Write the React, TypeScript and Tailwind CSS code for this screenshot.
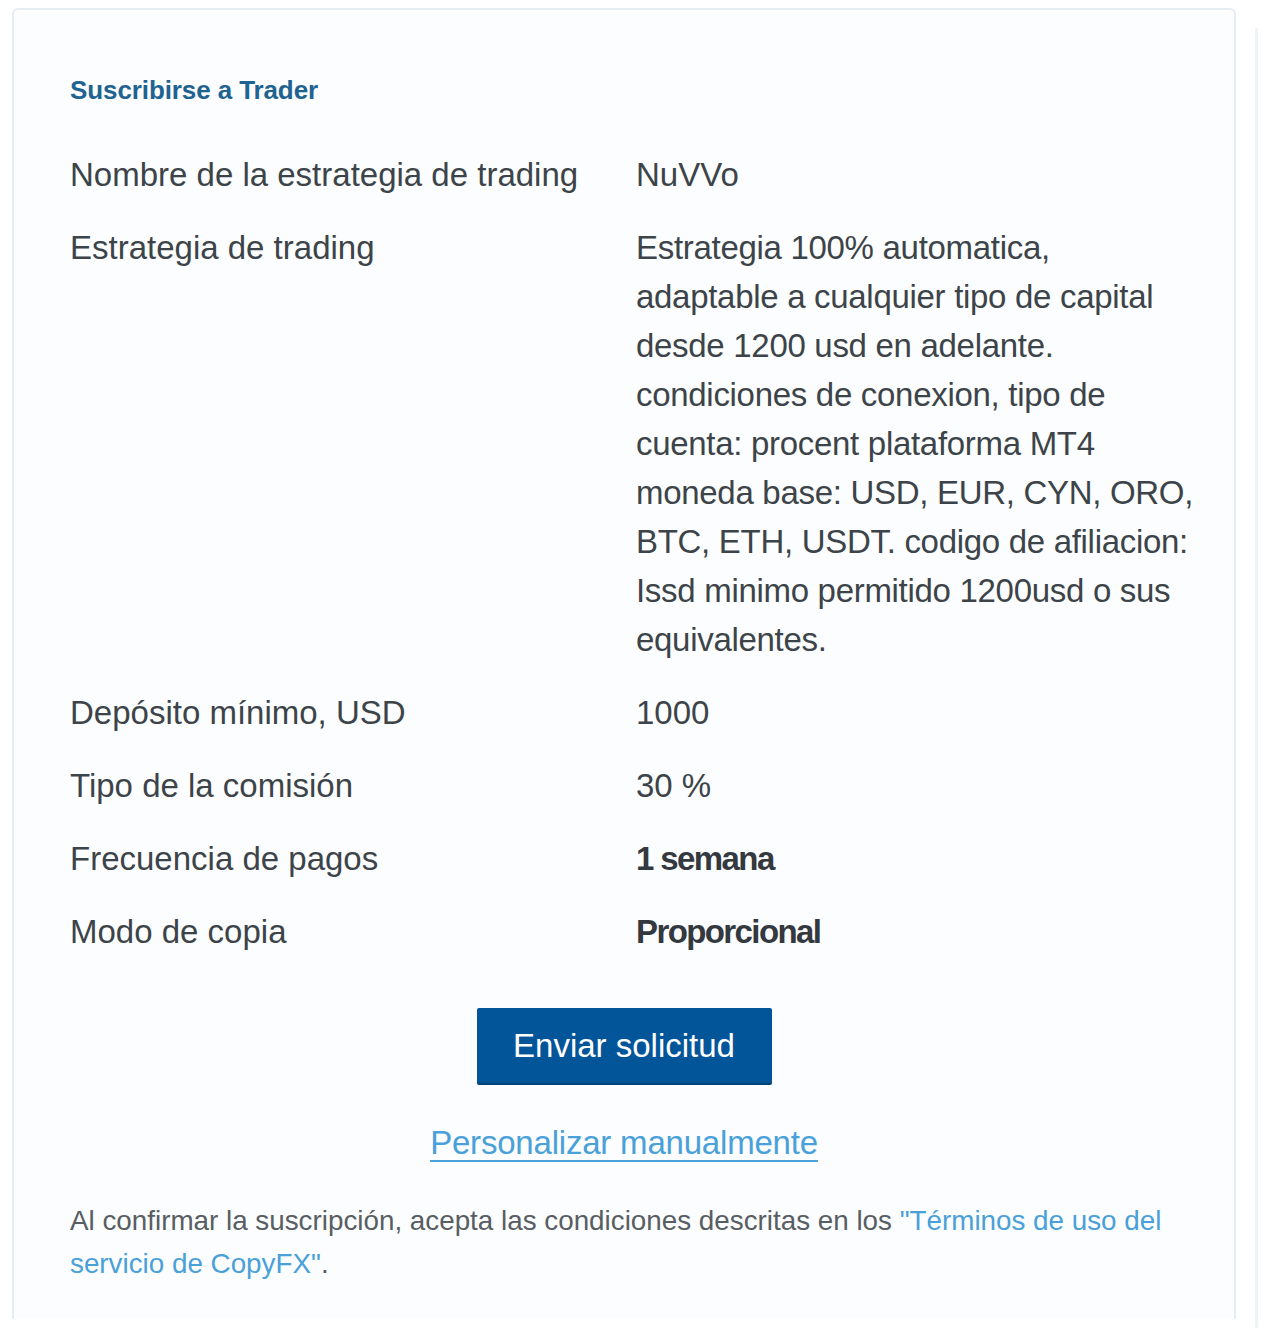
const rows: { label: string; value: string; strong?: boolean }[] = [
  { label: "Depósito mínimo, USD", value: "1000" },
  { label: "Tipo de la comisión", value: "30 %" },
  { label: "Frecuencia de pagos", value: "1 semana", strong: true },
  { label: "Modo de copia", value: "Proporcional", strong: true },
]

// lines kept as in the original wrap
const description = [
  "Estrategia 100% automatica,",
  "adaptable a cualquier tipo de capital",
  "desde 1200 usd en adelante.",
  "condiciones de conexion, tipo de",
  "cuenta: procent plataforma MT4",
  "moneda base: USD, EUR, CYN, ORO,",
  "BTC, ETH, USDT. codigo de afiliacion:",
  "Issd minimo permitido 1200usd o sus",
  "equivalentes.",
]

export default function App() {
  return (
    <div className="min-h-screen bg-white font-['Liberation_Sans',Arial,sans-serif]">
      <div className="flex items-start pl-[12px] pt-[8px]">
        <div className="w-[1224px] rounded-t-[6px] border-2 border-b-0 border-[#e6edf2] bg-[#fbfdfe] px-[56px] pt-[62px] pb-[34px]">
          <h2 className="mb-[42px] text-[26px] font-bold leading-[36px] tracking-[-0.1px] text-[#1f6391]">
            Suscribirse a Trader
          </h2>

          <div className="grid grid-cols-[566px_1fr] gap-y-[24px] text-[33px] leading-[49px] text-[#3d4449]">
            <div>Nombre de la estrategia de trading</div>
            <div>NuVVo</div>

            <div>Estrategia de trading</div>
            <div className="tracking-[-0.3px]">
              {description.map((line) => (
                <span key={line} className="block whitespace-nowrap">
                  {line}
                </span>
              ))}
            </div>

            {rows.map((r) => (
              <div key={r.label} className="contents">
                <div>{r.label}</div>
                <div className={r.strong ? "font-bold tracking-[-1.6px] text-[#33393e]" : ""}>
                  {r.value}
                </div>
              </div>
            ))}
          </div>

          <div className="mt-[52px] flex justify-center">
            <button className="h-[75px] w-[295px] rounded-[2px] bg-[#03559a] text-[33px] text-white shadow-[0_2px_0_#024379]">
              Enviar solicitud
            </button>
          </div>

          <div className="mt-[35px] flex justify-center">
            <a href="#" className="text-[33px] leading-[49px] tracking-[-0.2px] text-[#4aa0d9] underline decoration-[2px] underline-offset-[6px]">
              Personalizar manualmente
            </a>
          </div>

          <p className="mt-[32px] text-[27.8px] leading-[43px] text-[#585e63]">
            Al confirmar la suscripción, acepta las condiciones descritas en los{" "}
            <a href="#" className="text-[#4aa0d9]">
              "Términos de uso del servicio de CopyFX"
            </a>
            .
          </p>
        </div>
        <div className="ml-[19px] mt-[20px] h-[1300px] w-[3px] rounded-full bg-[#eef3f6]" />
      </div>
    </div>
  )
}
